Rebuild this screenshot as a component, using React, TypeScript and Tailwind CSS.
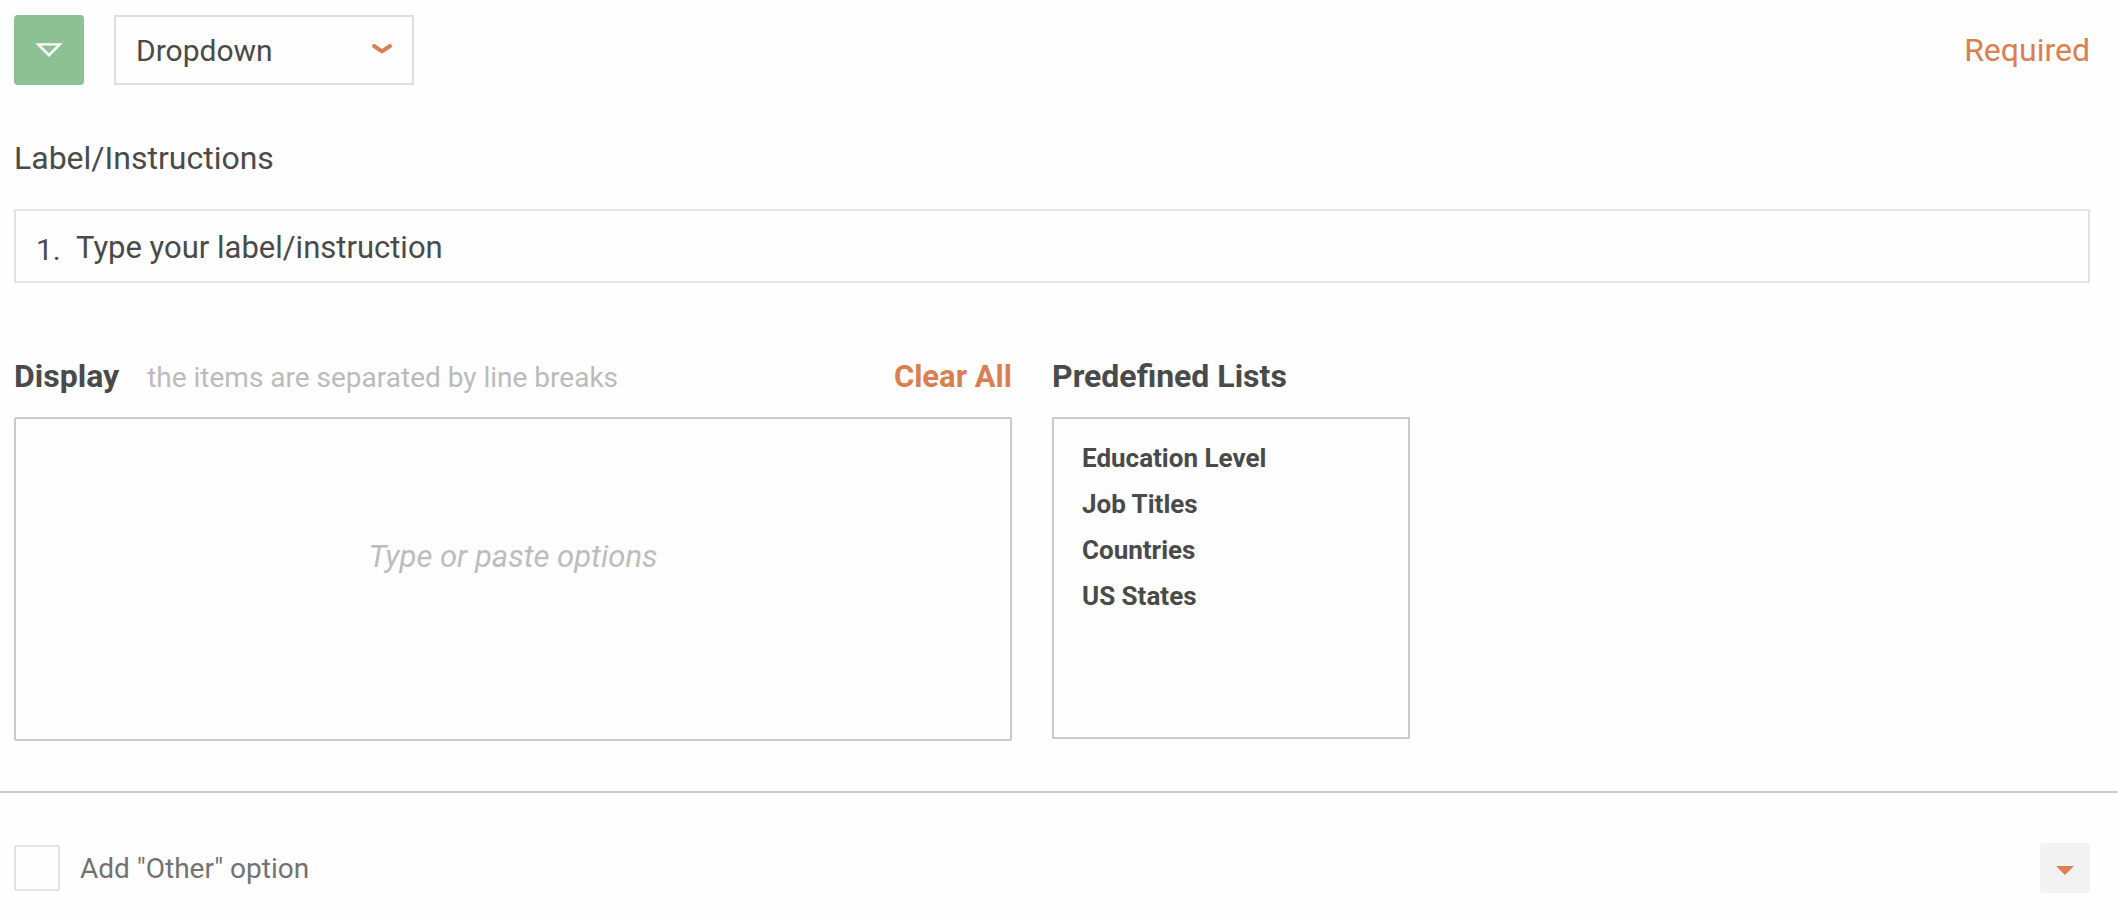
import { useState } from "react";

const PREDEFINED_LISTS = ["Education Level", "Job Titles", "Countries", "US States"];
const FIELD_TYPES = ["Dropdown", "Short Text", "Long Text", "Multiple Choice"];

export default function App() {
  const [type, setType] = useState("Dropdown");
  const [label, setLabel] = useState("Type your label/instruction");
  const [options, setOptions] = useState("");
  const [other, setOther] = useState(false);

  return (
    <main className="bg-[#fefefe] font-['Roboto',sans-serif] text-[#4a4a4a]">
      <div className="pt-[15px] pr-7 pb-[50px] pl-3.5">
        <header className="flex items-center">
          <div className="flex size-[70px] items-center justify-center rounded-[4px] bg-[#8dc195]">
            <svg className="h-4 w-7" viewBox="0 0 28 16" fill="none" stroke="#fff" strokeWidth="2.4" aria-hidden="true">
              <path d="M3.2 2.4H24.8L14 13.2Z" />
            </svg>
          </div>
          <div className="relative ml-[30px] w-[300px]">
            <select
              aria-label="Field type"
              value={type}
              onChange={(e) => setType(e.target.value)}
              className="h-[70px] w-full appearance-none border-2 border-[#dedede] px-5 text-[30px]"
            >
              {FIELD_TYPES.map((t) => (
                <option key={t}>{t}</option>
              ))}
            </select>
            <svg
              className="pointer-events-none absolute top-7 right-5 h-3 w-6"
              viewBox="0 0 24 12"
              fill="none"
              stroke="#dc7f50"
              strokeWidth="4"
              strokeLinecap="round"
              strokeLinejoin="round"
              aria-hidden="true"
            >
              <path d="M4 3L12 8.4L20 3" />
            </svg>
          </div>
          <button type="button" className="ml-auto text-[32px] leading-10 text-[#dc7f50]">
            Required
          </button>
        </header>

        <label htmlFor="label" className="mt-[53px] block text-[32px] leading-10">
          Label/Instructions
        </label>
        <div className="mt-[31px] flex h-[74px] items-center border-2 border-[#e2e2e2] px-5 pt-1">
          <span className="w-10 pt-1 text-[30px] leading-10">1.</span>
          <input
            id="label"
            value={label}
            onChange={(e) => setLabel(e.target.value)}
            className="h-10 min-w-0 flex-1 text-[31px] outline-none"
          />
        </div>

        <div className="mt-[73px] flex items-start gap-10">
          <section className="w-[998px]">
            <div className="flex h-10 items-baseline">
              <label htmlFor="options" className="text-[32px] leading-10 font-bold">
                Display
              </label>
              <p className="ml-7 text-[28px] leading-10 text-[#bbb]">the items are separated by line breaks</p>
              <button
                type="button"
                onClick={() => setOptions("")}
                className="ml-auto text-[31px] leading-10 font-bold text-[#dc7f50]"
              >
                Clear All
              </button>
            </div>
            <textarea
              id="options"
              value={options}
              onChange={(e) => setOptions(e.target.value)}
              placeholder="Type or paste options"
              className="mt-[21px] block h-[324px] w-full resize-none rounded-[2px] border-2 border-[#cbcbcb] pt-[118px] text-center text-[31px] leading-10 outline-none placeholder:text-[#bdbdbd] placeholder:italic"
            />
          </section>
          <section className="w-[358px]">
            <h2 className="text-[32px] leading-10 font-bold">Predefined Lists</h2>
            <ul className="mt-[21px] h-[322px] border-2 border-[#cbcbcb] px-7 pt-4">
              {PREDEFINED_LISTS.map((name) => (
                <li key={name} className="flex h-[46px] items-center">
                  <button type="button" onClick={() => setOptions(name)} className="text-[26px] leading-10 font-bold">
                    {name}
                  </button>
                </li>
              ))}
            </ul>
          </section>
        </div>
      </div>

      <footer className="flex items-center border-t-2 border-[#cbcbcb] pt-[50px] pr-7 pb-[29px] pl-3.5">
        <input
          id="other"
          type="checkbox"
          checked={other}
          onChange={(e) => setOther(e.target.checked)}
          className="size-[46px] appearance-none rounded-[2px] border-2 border-[#e2e2e2] checked:bg-[#8dc195]"
        />
        <label htmlFor="other" className="ml-5 pt-0.5 text-[28px] leading-10 text-[#727272]">
          Add "Other" option
        </label>
        <button
          type="button"
          aria-label="More settings"
          className="ml-auto flex size-[50px] items-center justify-center rounded-[4px] bg-[#f2f2f2] pt-1"
        >
          <svg className="h-[9px] w-[18px]" viewBox="0 0 18 9" fill="#dc7f50" aria-hidden="true">
            <path d="M0 0H18L9 9Z" />
          </svg>
        </button>
      </footer>
    </main>
  );
}
